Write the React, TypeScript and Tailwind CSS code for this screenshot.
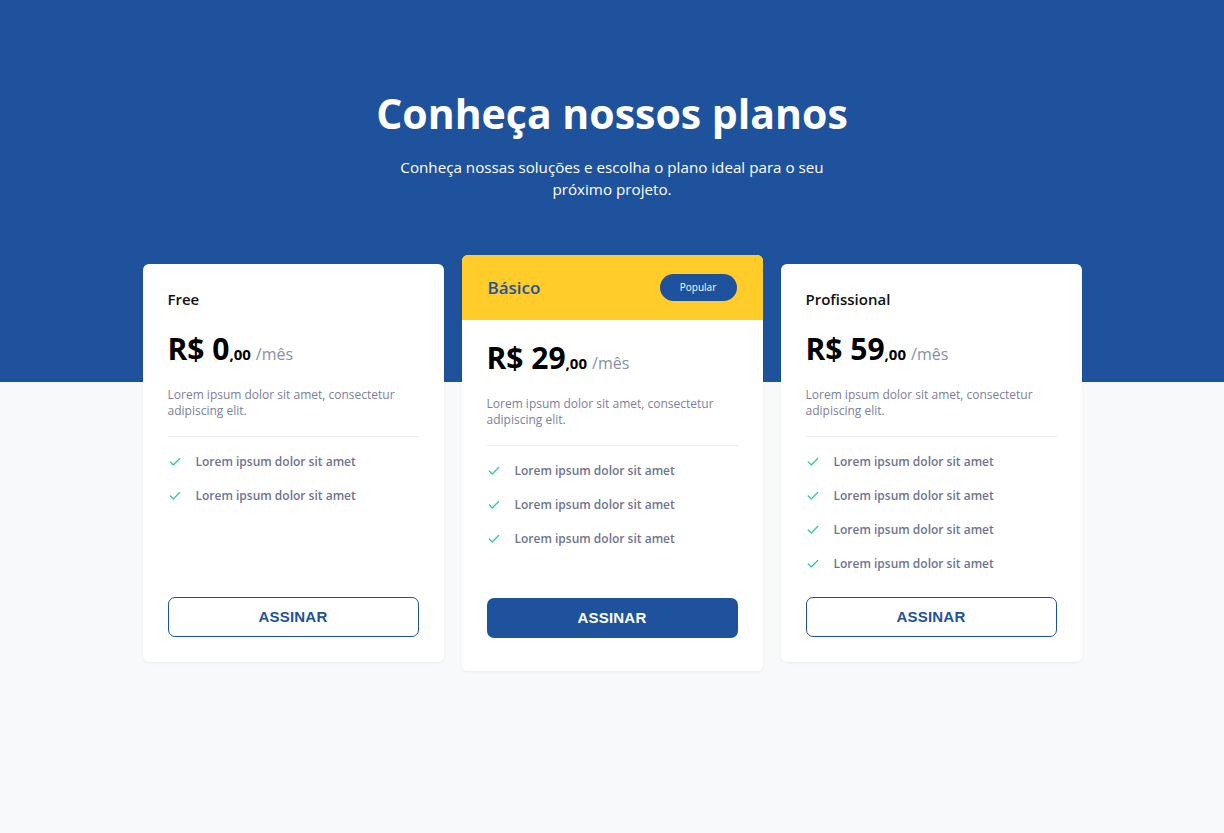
import React from "react";

function Check() {
  return (
    <svg width="14" height="14" viewBox="0 0 24 24" fill="none" stroke="#3ccf91" strokeWidth="2.5" strokeLinecap="round" strokeLinejoin="round" className="shrink-0">
      <path d="M20 6 9 17l-5-5" />
    </svg>
  );
}

function Price({ value }: { value: string }) {
  return (
    <div className="flex items-baseline leading-[40px] text-black">
      <span className="text-[30px] font-bold">R$ {value}</span>
      <span className="text-[15px] font-bold">,00</span>
      <span className="ml-[5px] text-[16px] text-[#8a8fa3]">/mês</span>
    </div>
  );
}

function Body({ value, features }: { value: string; features: number }) {
  return (
    <>
      <Price value={value} />
      <p className="mt-[13px] text-[12px] leading-[16px] text-[#7b8099]">
        Lorem ipsum dolor sit amet, consectetur adipiscing elit.
      </p>
      <div className="mt-[17px] h-px bg-[#eceef2]" />
      <ul className="mt-[15px] flex flex-col gap-[14px]">
        {Array.from({ length: features }).map((_, i) => (
          <li key={i} className="flex h-[20px] items-center gap-[14px] text-[12px] font-semibold text-[#6f7490]">
            <Check />
            <span>Lorem ipsum dolor sit amet</span>
          </li>
        ))}
      </ul>
      <div className="min-h-[23px] flex-1" />
    </>
  );
}

function OutlineButton() {
  return (
    <button className="h-[40px] w-full rounded-[7px] border border-[#1f529d] bg-white text-[15px] font-bold tracking-[0.2px] text-[#1f529d]" style={{ fontFamily: '"Liberation Sans", Arial, sans-serif' }}>
      ASSINAR
    </button>
  );
}

export default function App() {
  return (
    <div
      className="min-h-[833px] w-full bg-[linear-gradient(to_bottom,#1f529d_382px,#f8f9fb_382px)] pb-10"
      style={{ fontFamily: '"Open Sans", "Noto Sans", sans-serif' }}
    >
      <header className="flex flex-col items-center pt-[89px] text-center text-white">
        <h1 className="text-[41px] font-bold leading-[48px]">Conheça nossos planos</h1>
        <p className="mt-[19px] max-w-[450px] text-[15.2px] leading-[22px]">
          Conheça nossas soluções e escolha o plano ideal para o seu próximo projeto.
        </p>
      </header>

      <div className="mx-auto mt-[64px] grid w-[939px] grid-cols-3 gap-[18px]">
        <div className="flex flex-col rounded-[6px] bg-white px-[25px] pb-[25px] pt-[25px] shadow-[0_1px_3px_rgba(0,0,0,0.06)]">
          <h2 className="text-[15px] font-semibold leading-[20px] text-[#111]">Free</h2>
          <div className="mt-[20px] flex flex-1 flex-col">
            <Body value="0" features={2} />
          </div>
          <OutlineButton />
        </div>

        <div className="-my-[9px] flex flex-col overflow-hidden rounded-[6px] bg-white pb-[33px] shadow-[0_1px_3px_rgba(0,0,0,0.06)]">
          <div className="flex h-[65px] items-center justify-between bg-[#ffcc29] px-[26px]">
            <h2 className="text-[17px] font-semibold text-[#1f529d]">Básico</h2>
            <span className="flex h-[27px] w-[77px] items-center justify-center rounded-full bg-[#1f529d] text-[10px] font-medium text-white">
              Popular
            </span>
          </div>
          <div className="flex flex-1 flex-col px-[25px] pt-[18px]">
            <Body value="29" features={3} />
            <button className="h-[40px] w-full rounded-[7px] bg-[#1f529d] text-[15px] font-bold tracking-[0.2px] text-white" style={{ fontFamily: '"Liberation Sans", Arial, sans-serif' }}>
              ASSINAR
            </button>
          </div>
        </div>

        <div className="flex flex-col rounded-[6px] bg-white px-[25px] pb-[25px] pt-[25px] shadow-[0_1px_3px_rgba(0,0,0,0.06)]">
          <h2 className="text-[15px] font-semibold leading-[20px] text-[#111]">Profissional</h2>
          <div className="mt-[20px] flex flex-1 flex-col">
            <Body value="59" features={4} />
          </div>
          <OutlineButton />
        </div>
      </div>
    </div>
  );
}
